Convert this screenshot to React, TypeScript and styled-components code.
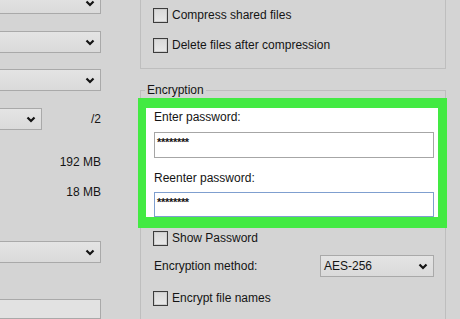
import React from "react";
import styled, { createGlobalStyle } from "styled-components";

const GlobalStyle = createGlobalStyle`
  html, body {
    margin: 0;
    padding: 0;
    background: #d4d4d4;
  }
  body {
    font-family: "Liberation Sans", Arial, sans-serif;
    font-size: 12px;
    color: #141414;
  }
`;

const Page = styled.div`
  display: flex;
  width: 460px;
  height: 319px;
  overflow: hidden;
  background: #d4d4d4;
`;

const LeftCol = styled.div`
  display: flex;
  flex-direction: column;
  flex: none;
  width: 101px;
`;

const Dropdown = styled.div<{ $width?: string; $top?: number }>`
  box-sizing: border-box;
  display: flex;
  align-items: center;
  justify-content: space-between;
  flex: none;
  height: 22px;
  width: ${(p) => p.$width || "calc(100% + 20px)"};
  margin-left: ${(p) => (p.$width ? "0" : "-20px")};
  margin-top: ${(p) => p.$top ?? 0}px;
  padding: 0 5px 0 3px;
  border: 1px solid #a9a9a9;
  background: linear-gradient(#e4e4e4, #dadada);
  line-height: 20px;
`;

const SmallDropdown = styled(Dropdown)`
  margin-left: -20px;
`;

const PageRow = styled.div`
  display: flex;
  align-items: center;
  justify-content: space-between;
  margin-top: 17px;
`;

const Stat = styled.div<{ $top: number }>`
  margin-top: ${(p) => p.$top}px;
  line-height: 14px;
  text-align: right;
`;

const ListBox = styled.div`
  box-sizing: border-box;
  margin: 36px 0 0 -20px;
  width: calc(100% + 20px);
  height: 40px;
  border: 1px solid #a9a9a9;
  background: #e2e2e2;
`;

const RightCol = styled.div`
  display: flex;
  flex-direction: column;
  flex: none;
  width: 309px;
  margin-left: 37px;
`;

const GroupBox = styled.div`
  display: flex;
  flex-direction: column;
  gap: 15px;
  margin: -10px 1px 0 2px;
  padding: 17px 0 15px 12px;
  border: 1px solid #bebebe;
`;

const CheckRow = styled.label<{ $top?: number; $left?: number }>`
  display: flex;
  align-items: center;
  gap: 4px;
  height: 15px;
  margin-top: ${(p) => p.$top ?? 0}px;
  margin-left: ${(p) => p.$left ?? 0}px;
  line-height: 15px;
`;

const CheckBox = styled.span`
  box-sizing: border-box;
  flex: none;
  width: 15px;
  height: 15px;
  border: 1px solid #3c3c3c;
  background: linear-gradient(#d9d9d9, #e9e9e9);
  box-shadow: inset 0 0 0 1px #cdcdcd;
`;

const Group = styled.fieldset`
  display: flex;
  flex-direction: column;
  margin: 14px 1px 0 2px;
  padding: 0 5px 40px 4px;
  border: 1px solid #bebebe;
  min-inline-size: 0;
`;

const Legend = styled.legend`
  padding: 0 2px;
  line-height: 14px;
`;

const Highlight = styled.div`
  display: flex;
  flex-direction: column;
  margin: 1px -7px 0 -7px;
  padding: 2px 4px 0 8px;
  border-style: solid;
  border-color: #43ea43;
  border-width: 10px 9px 11px 8px;
  background: #ffffff;
`;

const FieldLabel = styled.div<{ $top: number }>`
  margin-top: ${(p) => p.$top}px;
  line-height: 14px;
`;

const PasswordBox = styled.div<{ $focused?: boolean; $height: number; $top: number }>`
  box-sizing: border-box;
  height: ${(p) => p.$height}px;
  margin-top: ${(p) => p.$top}px;
  padding: 3px 2px 0;
  border: 1px solid ${(p) => (p.$focused ? "#7f9fcf" : "#a6a6a6")};
  background: #ffffff;
  font-size: 11px;
  font-weight: bold;
  line-height: 12px;
  letter-spacing: -0.3px;
`;

const MethodRow = styled.div`
  display: flex;
  align-items: center;
  justify-content: space-between;
  margin: 9px 6px 0 9px;
`;

const Chevron = () => (
  <svg width="10" height="7" viewBox="0 0 10 7">
    <polyline
      points="1.5,1.5 5,5 8.5,1.5"
      fill="none"
      stroke="#141414"
      strokeWidth="2.2"
    />
  </svg>
);

const App: React.FC = () => {
  return (
    <Page>
      <GlobalStyle />
      <LeftCol>
        <Dropdown $top={-8}>
          <span />
          <Chevron />
        </Dropdown>
        <Dropdown $top={17}>
          <span />
          <Chevron />
        </Dropdown>
        <Dropdown $top={16}>
          <span />
          <Chevron />
        </Dropdown>
        <PageRow>
          <SmallDropdown $width="62px">
            <span />
            <Chevron />
          </SmallDropdown>
          <span>/2</span>
        </PageRow>
        <Stat $top={25}>192 MB</Stat>
        <Stat $top={16}>18 MB</Stat>
        <Dropdown $top={42}>
          <span />
          <Chevron />
        </Dropdown>
        <ListBox />
      </LeftCol>

      <RightCol>
        <GroupBox>
          <CheckRow>
            <CheckBox />
            Compress shared files
          </CheckRow>
          <CheckRow>
            <CheckBox />
            Delete files after compression
          </CheckRow>
        </GroupBox>

        <Group>
          <Legend>Encryption</Legend>
          <Highlight>
            <FieldLabel $top={0}>Enter password:</FieldLabel>
            <PasswordBox $height={26} $top={8}>
              ********
            </PasswordBox>
            <FieldLabel $top={13}>Reenter password:</FieldLabel>
            <PasswordBox $height={25} $top={7} $focused>
              ********
            </PasswordBox>
          </Highlight>
          <CheckRow $top={3} $left={8}>
            <CheckBox />
            Show Password
          </CheckRow>
          <MethodRow>
            <span>Encryption method:</span>
            <Dropdown $width="114px">
              <span>AES-256</span>
              <Chevron />
            </Dropdown>
          </MethodRow>
          <CheckRow $top={14} $left={8}>
            <CheckBox />
            Encrypt file names
          </CheckRow>
        </Group>
      </RightCol>
    </Page>
  );
};

export default App;
